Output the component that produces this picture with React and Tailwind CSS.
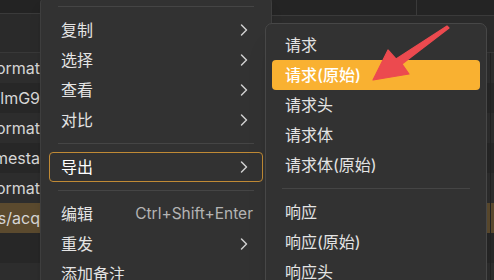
import { ChevronRight } from "lucide-react";

const rows = [
  { text: "format", tone: "bg-[#2d2d2d]" },
  { text: "JVlmG9", tone: "bg-[#272727]" },
  { text: "format", tone: "bg-[#2d2d2d]" },
  { text: "timesta", tone: "bg-[#272727]" },
  { text: "format", tone: "bg-[#2d2d2d]" },
  { text: "/apis/acq", tone: "bg-[#5b4a2e]" },
  { text: "", tone: "bg-[#272727]" },
  { text: "", tone: "bg-[#2d2d2d]" },
];

const mainItems = [
  [
    { label: "复制", sub: true },
    { label: "选择", sub: true },
    { label: "查看", sub: true },
    { label: "对比", sub: true },
  ],
  [{ label: "导出", sub: true, active: true }],
  [
    { label: "编辑", shortcut: "Ctrl+Shift+Enter" },
    { label: "重发", sub: true },
    { label: "添加备注" },
  ],
];

const subItems = [
  ["请求", "请求(原始)", "请求头", "请求体", "请求体(原始)"],
  ["响应", "响应(原始)", "响应头"],
];

const MenuItem = ({ label, sub, active, shortcut }) => (
  <div
    className={
      active
        ? "flex h-[30px] items-center rounded-[4px] border border-[#c08a35] pl-[11px] pr-[8px] text-white"
        : "flex h-[30px] items-center rounded-[4px] pl-[12px] pr-[9px] text-[#e4e4e4]"
    }
  >
    <span className="flex-1">{label}</span>
    {shortcut && <span className="pr-[1px] text-[15.5px] text-[#b4b4b4]">{shortcut}</span>}
    {sub && <ChevronRight size={20} strokeWidth={1.8} className="text-[#cfcfcf]" />}
  </div>
);

export default function App() {
  return (
    <div className="relative h-[280px] w-[494px] overflow-hidden bg-[#2a2a2a] font-['Inter','Noto_Sans_CJK_SC',sans-serif] text-[16px]">
      {/* table behind the menus */}
      <div className="flex h-[53px] border-b border-[#383838]">
        <div className="w-[272px] border-r border-[#353535]">
          <div className="h-[14px] border-b border-[#3a3a3a] bg-[#232323]" />
        </div>
        <div className="flex-1">
          <div className="flex h-[16px] border-b border-[#3a3a3a] bg-[#242424]">
            <div className="w-[145px] border-r border-[#3a3a3a]" />
          </div>
        </div>
      </div>
      {rows.map((row, i) => (
        <div key={i} className={`flex h-[30px] ${row.tone}`}>
          <div className="flex w-[40px] justify-end overflow-hidden whitespace-nowrap leading-[30px] text-[#d6d6d6]">
            {row.text}
          </div>
          <div className="flex-1" />
          <div className="w-[4px] border-l border-[#222]" />
        </div>
      ))}

      {/* main context menu */}
      <div className="absolute left-[40px] top-[-3px] w-[232px] rounded-md border border-[#3e3e3e] bg-[#323232] px-[8px] pb-[8px] shadow-lg">
        {mainItems.map((group, g) => (
          <div key={g}>
            <div className="mx-[9px] my-[8px] h-px bg-[#454545]" />
            {group.map((item) => (
              <MenuItem key={item.label} {...item} />
            ))}
          </div>
        ))}
      </div>

      {/* export submenu */}
      <div className="absolute left-[265px] top-[23px] w-[222px] rounded-[7px] border border-[#474747] bg-[#323232] px-[6px] pb-[8px] pt-[6px] shadow-xl">
        {subItems.map((group, g) => (
          <div key={g}>
            {g > 0 && <div className="mx-[10px] my-[8px] h-px bg-[#454545]" />}
            {group.map((label) => (
              <div
                key={label}
                className={
                  label === "请求(原始)"
                    ? "flex h-[30px] items-center rounded-[4px] bg-[#f9b131] pl-[13px] font-medium text-white"
                    : "flex h-[30px] items-center pl-[13px] text-[#e4e4e4]"
                }
              >
                {label}
              </div>
            ))}
          </div>
        ))}
      </div>

      {/* red pointer arrow */}
      <svg className="pointer-events-none absolute left-0 top-0" width="494" height="280" viewBox="0 0 494 280">
        <polygon
          points="447,26 449,28 402,64 409,74 373,80 388,50 396,59"
          fill="#ec4a4f"
          strokeLinejoin="round"
          stroke="#ec4a4f"
          strokeWidth="1.2"
        />
      </svg>
    </div>
  );
}
